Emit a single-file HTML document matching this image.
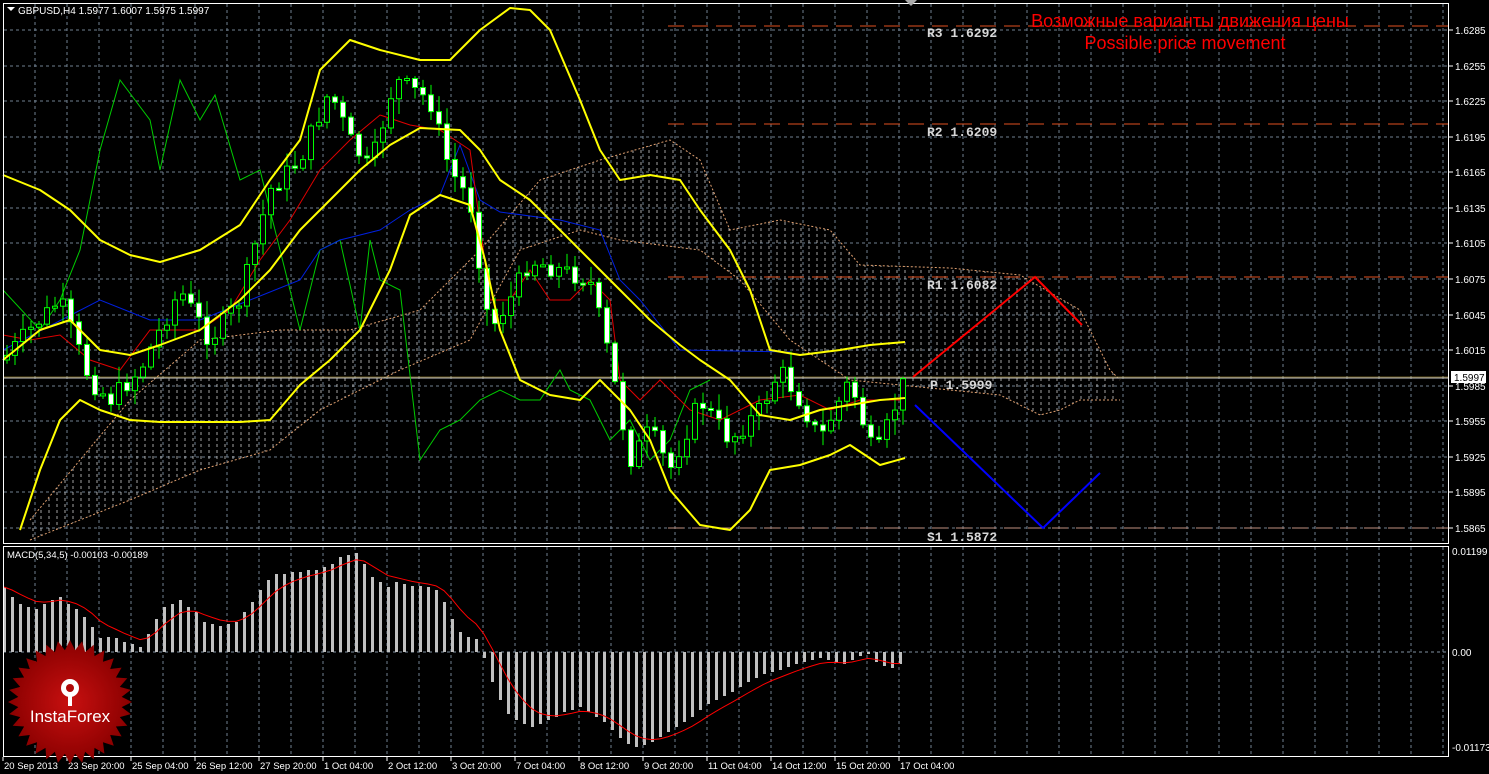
<!DOCTYPE html>
<html><head><meta charset="utf-8"><style>
html,body{margin:0;padding:0;background:#000;width:1489px;height:774px;overflow:hidden}
svg{display:block}
text{font-family:"Liberation Sans","DejaVu Sans",sans-serif}
text.mono{font-family:"Liberation Mono","DejaVu Sans Mono",monospace}
</style></head><body>
<svg id="s" width="1489" height="774" xmlns="http://www.w3.org/2000/svg">
<defs>
<pattern id="hat" width="8" height="6" patternUnits="userSpaceOnUse">
<line x1="1" y1="0" x2="1" y2="3" stroke="#d8d8d8" stroke-width="1"/>
</pattern>
<radialGradient id="rg"><stop offset="0" stop-color="#c81010"/><stop offset="1" stop-color="#8a0000"/></radialGradient>
</defs>
<rect width="1489" height="774" fill="#000"/>
<g id="grid"></g>
<polygon fill="url(#hat)" opacity="0.75" points="30,520 130,400 200,340 280,330 350,330 420,310 480,250 540,180 600,160 670,140 700,160 730,230 780,220 830,230 860,265 950,268 1020,275 1080,310 1110,370 1120,380 1120,400 1080,400 1060,410 1040,415 1000,395 900,385 850,380 790,340 740,280 700,250 620,240 580,230 520,250 470,340 400,370 320,410 270,450 200,470 130,500 30,540"/>
<polyline fill="none" stroke="#e0a070" stroke-width="1" stroke-dasharray="2,2" points="30,520 130,400 200,340 280,330 350,330 420,310 480,250 540,180 600,160 670,140 700,160 730,230 780,220 830,230 860,265 950,268 1020,275 1080,310 1110,370 1120,380"/>
<polyline fill="none" stroke="#e0a070" stroke-width="1" stroke-dasharray="2,2" points="30,540 130,500 200,470 270,450 320,410 400,370 470,340 520,250 580,230 620,240 700,250 740,280 790,340 850,380 900,385 1000,395 1040,415 1060,410 1080,400 1120,400"/>
<g stroke-dasharray="16,8" stroke-width="1">
<line x1="668" y1="26" x2="1449" y2="26" stroke="#e05020"/>
<line x1="668" y1="124" x2="1449" y2="124" stroke="#e05020"/>
<line x1="668" y1="277" x2="1449" y2="277" stroke="#e05020"/>
<line x1="668" y1="528" x2="1449" y2="528" stroke="#c09080"/>
</g>
<g fill="#d8d8d8" font-size="13" font-weight="bold">
<text class="mono" x="927" y="37">R3 1.6292</text>
<text class="mono" x="927" y="136">R2 1.6209</text>
<text class="mono" x="927" y="289">R1 1.6082</text>
<text class="mono" x="930" y="389">P 1.5999</text>
<text class="mono" x="927" y="541">S1 1.5872</text>
</g>
<line x1="3" y1="378" x2="1449" y2="378" stroke="#c8c8c8" stroke-width="1"/>
<line x1="3" y1="377" x2="1449" y2="377" stroke="#d0b040" stroke-width="0.6"/>
<polyline fill="none" stroke="#00cc00" stroke-width="1" points="3,290 40,330 60,300 80,250 100,150 120,80 135,100 150,120 160,170 180,80 200,120 215,95 240,180 260,170 280,250 300,330 320,250 340,240 360,330 370,240 380,280 400,290 420,460 440,430 460,420 480,400 500,390 520,400 540,400 560,370 570,390 590,400 610,440 630,420 650,460 670,440 690,390 710,380"/>
<polyline fill="none" stroke="#0020e0" stroke-width="1" points="3,350 100,300 150,320 200,320 250,300 300,280 320,250 340,240 380,230 410,210 440,195 460,145 480,200 500,212 560,220 600,230 620,280 640,300 680,350 790,352"/>
<polyline fill="none" stroke="#e00000" stroke-width="1" points="3,335 30,340 60,335 90,360 120,370 150,330 180,330 200,330 230,310 260,260 290,220 320,170 350,140 380,115 410,125 440,130 470,150 490,300 510,300 530,270 550,300 570,300 590,280 610,300 620,380 640,400 660,380 690,410 720,420 760,400 800,395 830,410 860,400 900,400"/>
<g id="candles"></g>
<g fill="none" stroke="#ffff00" stroke-width="2" stroke-linejoin="round">
<polyline points="3,175 40,190 70,210 100,240 130,255 160,262 200,250 240,225 270,180 300,140 320,70 350,40 380,50 420,60 450,60 480,30 510,8 530,10 550,30 580,100 600,150 620,180 650,175 680,180 700,210 730,250 750,290 770,350 800,355 840,350 870,345 905,342"/>
<polyline points="3,360 40,330 70,320 100,350 130,355 160,345 200,330 240,300 270,270 300,230 330,200 360,170 390,145 420,128 460,130 480,150 500,180 530,200 560,230 590,260 620,290 650,320 680,345 700,360 730,380 760,415 790,420 820,410 850,405 880,400 905,398"/>
<polyline points="20,530 40,470 60,420 80,400 100,410 130,420 160,422 200,422 240,422 270,420 300,385 330,360 360,330 390,270 410,215 440,195 470,205 485,260 500,330 520,380 550,395 580,400 600,380 630,410 650,440 670,490 700,525 730,530 750,510 770,470 800,465 830,455 850,445 880,465 905,458"/>
</g>
<polyline fill="none" stroke="#ff0000" stroke-width="2" points="913,377 1035,277 1082,325"/>
<polyline fill="none" stroke="#0000ff" stroke-width="2" points="915,405 1043,528 1100,473"/>
<text x="1190" y="27" fill="#ff0000" font-size="18" text-anchor="middle">Возможные варианты движения цены</text>
<text x="1185" y="49" fill="#ff0000" font-size="18" text-anchor="middle">Possible price movement</text>
<line x1="3" y1="652" x2="1449" y2="652" stroke="#8090a0" stroke-dasharray="3,3"/>
<g id="macd"></g>
<rect x="3.5" y="3.5" width="1445" height="540" fill="none" stroke="#fff"/>
<rect x="3.5" y="546.5" width="1445" height="210" fill="none" stroke="#fff"/>
<polygon points="7,7 15,7 11,11" fill="#fff"/>
<text x="18" y="14" fill="#fff" font-size="10">GBPUSD,H4  1.5977 1.6007 1.5975 1.5997</text>
<text x="7" y="558" fill="#fff" font-size="9.5">MACD(5,34,5) -0.00103 -0.00189</text>
<polygon points="905,0 917,0 911,6" fill="#aaa"/>
<rect x="1451" y="371" width="35" height="12" fill="#fff"/>
<text x="1454" y="381" fill="#000" font-size="10">1.5997</text>
<g id="axis" fill="#fff" font-size="10"></g>
<g transform="translate(70,702)">
<polygon id="star" fill="url(#rg)"/>
<g fill="#fff"><circle cy="-14" r="9"/><circle cy="-14" r="4" fill="#b00808"/><rect x="-2" y="-10" width="4" height="14"/></g>
<text y="20" fill="#fff" font-size="17" text-anchor="middle">InstaForex</text>
</g>
</svg>
<script>
(function(){
var NS="http://www.w3.org/2000/svg";
function el(p,t,a){var e=document.createElementNS(NS,t);for(var k in a)e.setAttribute(k,a[k]);p.appendChild(e);return e;}
var g=document.getElementById("grid");
for(var x=35;x<1449;x+=32){el(g,"line",{x1:x,y1:4,x2:x,y2:543,stroke:"#708090","stroke-dasharray":"3,3"});el(g,"line",{x1:x,y1:547,x2:x,y2:756,stroke:"#708090","stroke-dasharray":"3,3"});}
var ax=document.getElementById("axis");
var lv=["1.6285","1.6255","1.6225","1.6195","1.6165","1.6135","1.6105","1.6075","1.6045","1.6015","1.5985","1.5955","1.5925","1.5895","1.5865"];
for(var i=0;i<15;i++){var y=Math.round(33+i*35.57)-3;el(g,"line",{x1:4,y1:y,x2:1448,y2:y,stroke:"#708090","stroke-dasharray":"3,3"});el(ax,"line",{x1:1449,y1:y,x2:1453,y2:y,stroke:"#fff"});var t=el(ax,"text",{x:1455,y:y+4});t.textContent=lv[i];}
[["0.01199",555],["0.00",656],["-0.01173",751]].forEach(function(a){var t=el(ax,"text",{x:1452,y:a[1]});t.textContent=a[0];});
var tl=["20 Sep 2013","23 Sep 20:00","25 Sep 04:00","26 Sep 12:00","27 Sep 20:00","1 Oct 04:00","2 Oct 12:00","3 Oct 20:00","7 Oct 04:00","8 Oct 12:00","9 Oct 20:00","11 Oct 04:00","14 Oct 12:00","15 Oct 20:00","17 Oct 04:00"];
for(var i=0;i<tl.length;i++){var x=3+i*64;el(ax,"line",{x1:x,y1:757,x2:x,y2:761,stroke:"#fff"});var t=el(ax,"text",{x:x+1,y:769,"font-size":"9.5"});t.textContent=tl[i];}
var P=[[3,360],[30,330],[60,300],[90,380],[110,400],[140,370],[180,290],[210,340],[240,300],[270,190],[300,160],[330,90],[350,140],[370,170],[395,80],[430,100],[450,170],[470,200],[490,330],[510,300],[530,260],[560,270],[590,280],[610,360],[630,460],[650,430],[670,470],[700,400],[730,440],[760,410],[780,370],[800,400],[820,440],[850,380],[875,460],[905,380]];
function iy(x){for(var i=1;i<P.length;i++)if(x<=P[i][0]){var a=P[i-1],b=P[i];return a[1]+(b[1]-a[1])*(x-a[0])/(b[0]-a[0]);}return 380;}
var seed=7;function r(){seed=(seed*9301+49297)%233280;return seed/233280;}
var cg=document.getElementById("candles");var prev=iy(3);
for(var x=7;x<=905;x+=8){var c=iy(x)+(r()-0.5)*20,o=prev;var hi=Math.min(o,c)-r()*15-2,lo=Math.max(o,c)+r()*15+2;
el(cg,"line",{x1:x,y1:hi,x2:x,y2:lo,stroke:"#00ff00"});
var by=Math.min(o,c),h=Math.max(2,Math.abs(c-o));
el(cg,"rect",{x:x-2.5,y:by,width:5,height:h,fill:(c>o?"#fff":"#000"),stroke:"#00ff00","stroke-width":1});
prev=c;}
var H=[65,55,48,45,43,48,52,55,48,43,35,25,14,15,14,10,8,5,18,33,45,48,52,45,40,30,28,26,28,30,40,50,62,72,78,78,80,80,82,82,85,88,95,97,99,88,75,70,65,70,68,66,66,65,62,50,33,20,15,13,-6,-30,-48,-62,-68,-72,-75,-72,-68,-65,-60,-58,-55,-60,-65,-70,-78,-86,-92,-95,-93,-90,-85,-80,-75,-70,-65,-58,-52,-48,-44,-40,-35,-30,-26,-22,-20,-18,-15,-12,-10,-8,-6,-8,-10,-12,-8,-4,-2,-10,-14,-16,-12];
var mg=document.getElementById("macd");var pts=[],s=H[0];
for(var i=0;i<H.length;i++){var x=3+i*8,h=H[i];var y=h>0?652-h:652;el(mg,"rect",{x:x,y:y,width:3,height:Math.abs(h)||1,fill:"#c0c0c0"});s=s+(h-s)*0.3;pts.push((x+1)+","+(652-s));}
el(mg,"polyline",{points:pts.join(" "),fill:"none",stroke:"#ff0000","stroke-width":1});
var sp=[];for(var i=0;i<64;i++){var a=i*Math.PI/32,rr=i%2?52:62;sp.push((rr*Math.sin(a)).toFixed(1)+","+(-rr*Math.cos(a)).toFixed(1));}
document.getElementById("star").setAttribute("points",sp.join(" "));
})();
</script>
</body></html>
